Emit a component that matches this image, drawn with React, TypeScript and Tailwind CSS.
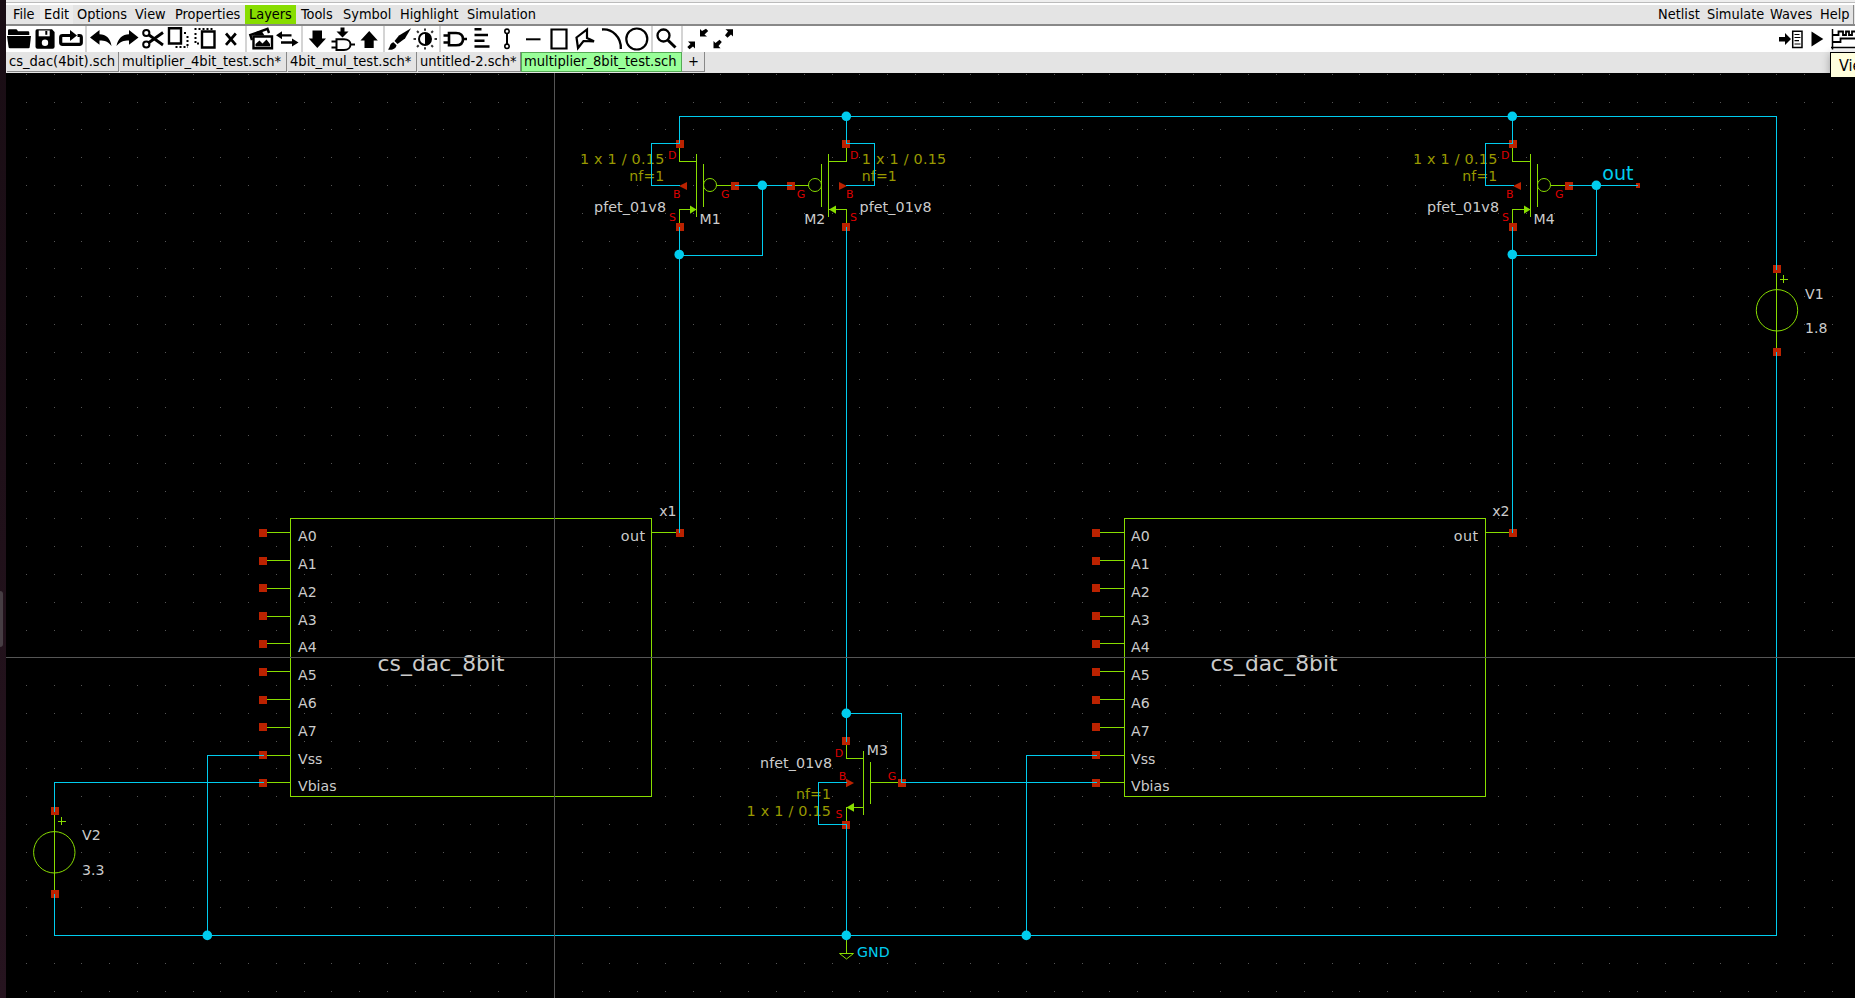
import React, { ReactNode } from "react";

const WIRE = "#00ccee";
const SYM = "#88dd00";
const PIN = "#bb2200";

/* ---------- menu bar ---------- */

function MenuItem({ label, className }: { label: string; className: string }) {
  return <div className={`h-[19px] shrink-0 whitespace-nowrap leading-[19px] ${className}`}>{label}</div>;
}

function MenuBar() {
  return (
    <div className="flex h-[21px] shrink-0 border-b-2 border-[#888888] bg-[#e4e4e4] pl-[2px]">
      <MenuItem label="File" className="w-[32px] pl-[5px]" />
      <MenuItem label="Edit" className="w-[33px] bg-[#ececec] pl-[4px]" />
      <MenuItem label="Options" className="w-[57px] pl-[4px]" />
      <MenuItem label="View" className="w-[41px] pl-[5px]" />
      <MenuItem label="Properties" className="w-[74px] pl-[4px]" />
      <MenuItem label="Layers" className="w-[51px] bg-[#88dd00] pl-[4px]" />
      <MenuItem label="Tools" className="w-[43px] pl-[5px]" />
      <MenuItem label="Symbol" className="w-[57px] pl-[4px]" />
      <MenuItem label="Highlight" className="w-[67px] pl-[4px]" />
      <MenuItem label="Simulation" className="w-[90px] pl-[4px]" />
      <div className="flex-1" />
      <MenuItem label="Netlist" className="w-[49px] pl-[4px]" />
      <MenuItem label="Simulate" className="w-[63px] pl-[4px]" />
      <MenuItem label="Waves" className="w-[50px] pl-[4px]" />
      <MenuItem label="Help" className="w-[38px] border-r border-[#888888] pl-[4px]" />
      <div className="w-px" />
    </div>
  );
}

/* ---------- tool bar ---------- */

function Tool({ x, w, cls, children }: { x: number; w: number; cls: string; children: ReactNode }) {
  return (
    <svg className={`h-[26px] shrink-0 ${cls}`} viewBox={`${x} 26 ${w} 26`} fill="none" stroke="#000" strokeWidth={2}>
      {children}
    </svg>
  );
}

function Sep() {
  return <div className="h-[26px] w-[2px] shrink-0 bg-[#d4d4d4]" />;
}

function ToolBar() {
  return (
    <div className="flex h-[26px] shrink-0 bg-white">
      <Tool x={6} w={27} cls="w-[27px]">
        <g fill="#000" stroke="none">
          <path d="M8 35V30.5q0-1.2 1.2-1.2H16q1 0 1.4 1l.5 1H28q1.3 0 1.3 1.3V35z" />
          <path d="M7 36H31L29.7 47.3q-.2 1-1.2 1H9.8q-1 0-1.2-1z" />
        </g>
      </Tool>
      <Tool x={33} w={25} cls="w-[25px]">
        <path d="M37 29.3H52L54.6 32V46.7q0 2-2 2H37.5q-2 0-2-2V31q0-1.7 1.5-1.7z" fill="#000" stroke="none" />
        <path d="M38.7 30.5H49.7V36.3H38.7z" fill="#fff" stroke="none" />
        <path d="M46.3 31V34.8" />
        <circle cx="45" cy="42.8" r="3.2" fill="#fff" stroke="none" />
      </Tool>
      <Tool x={58} w={27} cls="w-[27px]">
        <path d="M67 35.5H62.5q-1.8 0-1.8 1.8V42.6q0 1.8 1.8 1.8H79.5q1.8 0 1.8-1.8V37.3q0-1.8-1.8-1.8H77.5M66 35.5H71" strokeWidth="3.2" />
        <path d="M70 30L77 35.5L70 41z" fill="#000" stroke="none" />
      </Tool>
      <Sep />
      <Tool x={87} w={26} cls="w-[26px]">
        <path d="M90 37.5L99.5 30V34.3C106 34.3 110.5 38.5 111.5 46C108 41.3 105 40.5 99.5 40.5V44.7z" fill="#000" stroke="none" />
      </Tool>
      <Tool x={113} w={27} cls="w-[27px]">
        <path d="M138.5 37.5L129 30V34.3C122.5 34.3 118 38.5 116.5 46C120.5 41.3 123.5 40.5 129 40.5V44.7z" fill="#000" stroke="none" />
      </Tool>
      <Tool x={140} w={26} cls="w-[26px]">
        <circle cx="146.3" cy="33" r="3.1" />
        <circle cx="146.3" cy="44.5" r="3.1" />
        <path d="M149 35L163 45M149 42.5L163 32.5" strokeWidth="2.8" />
      </Tool>
      <Tool x={166} w={26} cls="w-[26px]">
        <path d="M169 28.2H181V43.5H169z" strokeWidth="2.4" />
        <path d="M184 33H188M187.5 36V48M175.5 47H188" strokeDasharray="2 2" />
      </Tool>
      <Tool x={192} w={26} cls="w-[26px]">
        <path d="M202 31.5H214.5V47.5H202z" strokeWidth="2.4" />
        <path d="M194.5 29H214M195.5 33V45M199 43.5H195" strokeDasharray="2 2" />
      </Tool>
      <Tool x={218} w={27} cls="w-[27px]">
        <path d="M226 33.5L235.8 44.8M235.8 33.5L226 44.8" strokeWidth="2.7" />
      </Tool>
      <Sep />
      <Tool x={247} w={27} cls="w-[27px]">
        <path d="M253.5 36.5H272V48.2H253.5z" strokeWidth="2.4" />
        <path d="M255.5 46.5V44L259.5 40.5L262.5 43.5L266.5 39.5L270 44V46.5z" fill="#000" stroke="none" />
        <path d="M252 40L250.3 35L267.5 28.8L269 33" strokeWidth="2.4" />
        <path d="M253.5 35.5L257 31.5L262 31.5L264.5 35.5z" fill="#000" stroke="none" />
      </Tool>
      <Tool x={274} w={27} cls="w-[27px]">
        <path d="M279 35.3H291.5M281 42.5H295" strokeWidth="2.3" />
        <path d="M276 35.3L282 31.3V39.3zM298.5 42.5L292 38.5V46.5z" fill="#000" stroke="none" />
      </Tool>
      <Sep />
      <Tool x={303} w={26} cls="w-[26px]">
        <path d="M312.5 30.5H322V38.5H326L317.3 48L308.7 38.5H312.5z" fill="#000" stroke="none" />
      </Tool>
      <Tool x={329} w={29} cls="w-[29px]">
        <path d="M340.5 27.5H344.5V31.5H348.5L342.5 37.5L336.5 31.5H340.5z" fill="#000" stroke="none" />
        <path d="M336.5 39.3H344C348 39.3 350.5 41.5 350.5 44.5S348 50 344 50H336.5zM331.5 41.5H336M331.5 47.5H336M351 44.5H355" />
      </Tool>
      <Tool x={358} w={25} cls="w-[25px]">
        <path d="M364.5 48H373.7V40.5H377.8L369.2 31L360.5 40.5H364.5z" fill="#000" stroke="none" />
      </Tool>
      <Sep />
      <Tool x={385} w={27} cls="w-[27px]">
        <path d="M411 28.3L405 38.5L397.5 44L394.5 41L399 35.5z" fill="#000" stroke="none" />
        <path d="M393.5 42.3L396.5 45.3C396 49 392 50.5 388 49.5C390.5 47.5 389.5 43 393.5 42.3z" fill="#000" stroke="none" />
      </Tool>
      <Tool x={412} w={27} cls="w-[27px]">
        <circle cx="425" cy="39" r="6" />
        <path d="M425 33A6 6 0 0 1 425 45z" fill="#000" stroke="none" />
        <path d="M425 28.5V30.7M425 47.3V49.5M413.5 39H416M434.5 39H437M417 31L418.7 32.7M433 31L431.3 32.7M417 47L418.7 45.3M433 47L431.3 45.3" stroke="#333" />
      </Tool>
      <Sep />
      <Tool x={441} w={28} cls="w-[28px]">
        <path d="M449 33H456C460.5 33 463 35.5 463 39.2S460.5 45.3 456 45.3H449zM443.5 35.5H449M443.5 42.5H449M463 39H467" strokeWidth="2.6" />
      </Tool>
      <Tool x={469} w={28} cls="w-[28px]">
        <path d="M474.5 29.2H481.5M474.5 35H488M474.5 40.7H484.5M474.5 46.4H489.5" strokeWidth="2.5" />
      </Tool>
      <Tool x={497} w={23} cls="w-[23px]">
        <circle cx="507" cy="31.3" r="2.2" strokeWidth="1.6" />
        <circle cx="507" cy="46.3" r="2.2" strokeWidth="1.6" />
        <path d="M507 33V45" />
      </Tool>
      <Tool x={520} w={28} cls="w-[28px]">
        <path d="M526 39.3H540.5" />
      </Tool>
      <Tool x={548} w={24} cls="w-[24px]">
        <path d="M551.5 29.5H566.5V48.5H551.5z" strokeWidth="2.2" />
      </Tool>
      <Tool x={572} w={28} cls="w-[28px]">
        <path d="M576.5 37.5L587 29.5V38L594 41.3L583.5 41L578 48z" strokeWidth="2.2" />
      </Tool>
      <Tool x={600} w={24} cls="w-[24px]">
        <path d="M602 29.5C612 28.5 621.5 37 620.8 49" strokeWidth="2.3" />
      </Tool>
      <Tool x={624} w={27} cls="w-[27px]">
        <circle cx="636.8" cy="39" r="10.5" strokeWidth="2.2" />
      </Tool>
      <Sep />
      <Tool x={653} w={28} cls="w-[28px]">
        <circle cx="663.5" cy="35.5" r="6" strokeWidth="2.3" />
        <path d="M668 40.2L675.5 47.5" strokeWidth="3" />
      </Tool>
      <Sep />
      <Tool x={683} w={28} cls="w-[28px]">
        <path d="M700 29L702 31L706 28.8L708.2 31L704.5 34.5L707 36.5H700zM688 41.5H695V48.5L693 46.5L689.5 49.3L687.3 47L690.5 44z" fill="#000" stroke="none" />
      </Tool>
      <Tool x={711} w={25} cls="w-[25px]">
        <path d="M725.5 29.3H733V36.5L731 34.5L727.5 37.8L725 35.3L728 31.5zM713.5 41L715.5 43L719.5 39.8L721.8 42L718.5 46L720.5 48.3H713.5z" fill="#000" stroke="none" />
      </Tool>
      <div className="flex-1" />
      <Tool x={1777} w={28} cls="w-[28px]">
        <path d="M1779 37H1785V33L1791 39L1785 45V41.5H1779z" fill="#000" stroke="none" />
        <path d="M1792.7 31.2H1802V47.5H1792.7z" strokeWidth="1.5" />
        <path d="M1794.5 34.5H1799.5M1794.5 37.5H1800.5M1794.5 40.7H1799M1794.5 44H1800.5" strokeWidth="1.2" />
      </Tool>
      <Tool x={1805} w={22} cls="w-[22px]">
        <path d="M1811.5 31.5L1823.3 39L1811.5 46.5z" fill="#000" stroke="none" />
      </Tool>
      <Tool x={1827} w={28} cls="w-[28px]">
        <path d="M1832.5 29V49.5M1831 47.5H1855" strokeWidth="1.5" />
        <path d="M1833 35H1838.5V31.5H1843V35H1846V31.5H1849V35H1852V31.5H1855M1833 42H1840.5V38.5H1855" strokeWidth="1.8" />
      </Tool>
    </div>
  );
}

/* ---------- tabs ---------- */

function Tab({ label, className }: { label: string; className: string }) {
  return (
    <div className={`h-[20px] shrink-0 whitespace-nowrap border-b border-r border-[#888888] leading-[18px] ${className}`}>
      {label}
    </div>
  );
}

function TabBar() {
  return (
    <div className="flex h-[21px] shrink-0 bg-[#e4e4e4] pl-px text-[14.55px]">
      <Tab label="cs_dac(4bit).sch" className="mr-px w-[112px] pl-[2px]" />
      <Tab label="multiplier_4bit_test.sch*" className="mr-px w-[167px] pl-[2px]" />
      <Tab label="4bit_mul_test.sch*" className="mr-px w-[129px] pl-[2px]" />
      <Tab label="untitled-2.sch*" className="w-[103px] pl-[2px]" />
      <div className="h-[20px] w-[161px] shrink-0 whitespace-nowrap border border-[#55aa55] bg-[#99ff99] pl-[2px] leading-[16px]">
        multiplier_8bit_test.sch
      </div>
      <Tab label="+" className="w-[23px] pl-[6px]" />
    </div>
  );
}

/* ---------- schematic ---------- */

type LabelProps = { x: number; y: number; w?: number; s?: number; fill?: string; end?: boolean; children: string };

function Label({ x, y, w, s = 14.1, fill = "#cccccc", end = false, children }: LabelProps) {
  return (
    <text x={x} y={y} textLength={w} fontSize={s} fill={fill} textAnchor={end ? "end" : "start"}>
      {children}
    </text>
  );
}

function Line({ d, c = WIRE }: { d: string; c?: string }) {
  return <path d={d} transform="translate(.5 .5)" stroke={c} fill="none" shapeRendering="crispEdges" strokeLinecap="square" />;
}

function Pin({ x, y }: { x: number; y: number }) {
  return <rect x={x} y={y} width={8} height={8} fill={PIN} />;
}

function Node({ x, y }: { x: number; y: number }) {
  return <circle cx={x} cy={y} r={4.8} fill={WIRE} />;
}

function Pfet({ dx, cx, name }: { dx: number; cx: number; name: string }) {
  const X = (n: number) => n + dx;
  const C = (n: number) => n + cx;
  return (
    <g>
      <Pin x={X(676)} y={140} />
      <Pin x={X(676)} y={223} />
      <Pin x={C(731)} y={182} />
      <path d={`M${C(679)} 186L${C(687)} 182V190z`} fill={PIN} />
      <Line c={SYM} d={`M${X(679)} 148V161H${C(696)}M${C(696)} 154V216M${C(703)} 164V206M${C(717)} 185H${C(730)}M${X(679)} 222V209H${C(696)}`} />
      <circle cx={C(710)} cy={185} r={6.5} fill="none" stroke={SYM} />
      <path d={`M${C(690)} 205.5L${C(696.5)} 209.5L${C(690)} 213.7z`} fill={SYM} />
      <Label x={X(664.3)} y={164} w={84.4} s={14.4} fill="#999900" end>1 x 1 / 0.15</Label>
      <Label x={X(664.3)} y={181} w={35} fill="#999900" end>nf=1</Label>
      <Label x={X(666)} y={212} w={72} s={14.3} end>pfet_01v8</Label>
      <Label x={C(699.5)} y={224}>{name}</Label>
      <Label x={X(668)} y={159} s={11} fill="#dd0000">D</Label>
      <Label x={X(673)} y={198} s={11} fill="#dd0000">B</Label>
      <Label x={C(721)} y={198} s={11} fill="#dd0000">G</Label>
      <Label x={X(669)} y={221} s={11} fill="#dd0000">S</Label>
      <Line d={`M${X(679)} 116V143H${C(651)}V185H${C(679)}M${C(735)} 185H${C(762)}M${X(679)} 227V532`} />
    </g>
  );
}

const PORTS: [string, number, number][] = [
  ["A0", 529, 532],
  ["A1", 557, 560],
  ["A2", 584, 588],
  ["A3", 612, 616],
  ["A4", 640, 643],
  ["A5", 668, 671],
  ["A6", 696, 699],
  ["A7", 723, 727],
  ["Vss", 751, 755],
  ["Vbias", 779, 782],
];

function Dac({ dx, left, name }: { dx: number; left: number; name: string }) {
  return (
    <g>
      {PORTS.map(([port, top, y]) => (
        <g key={port}>
          <Pin x={259 + dx} y={top} />
          <Line c={SYM} d={`M${267 + dx} ${y}H${left}`} />
          <Label x={298 + dx} y={y + 9}>{port}</Label>
        </g>
      ))}
      <Line c={SYM} d={`M${left} 518H${left + 361}V796H${left}zM${left + 361} 532H${675 + dx}`} />
      <Pin x={676 + dx} y={529} />
      <Label x={645 + dx} y={541} w={24.3} s={14.3} end>out</Label>
      <Label x={676.5 + dx} y={516} end>{name}</Label>
      <Label x={377.6 + dx} y={671} w={127} s={21.8}>cs_dac_8bit</Label>
    </g>
  );
}

type SourceProps = { x: number; y: number; cx: number; name: string; nameY: number; value: string; tx: number };

function Source({ x, y, cx, name, nameY, value, tx }: SourceProps) {
  return (
    <g>
      <Pin x={x - 3} y={y - 45} />
      <Pin x={x - 3} y={y + 38} />
      <circle cx={cx} cy={y + 0.3} r={20.7} fill="none" stroke={SYM} />
      <Line c={SYM} d={`M${x} ${y - 37}V${y + 37}M${x + 4} ${y - 31}H${x + 11}M${x + 7} ${y - 35}V${y - 28}`} />
      <Label x={tx} y={nameY}>{name}</Label>
      <Label x={tx} y={y + 23}>{value}</Label>
    </g>
  );
}

const GRID: string = (() => {
  let d = "";
  for (let i = 0; i < 67; i++) {
    for (let j = 0; j < 34; j++) {
      d += `M${Math.floor(26.4 + i * 27.78)} ${Math.floor(74.4 + j * 27.78)}h1v1h-1z`;
    }
  }
  return d;
})();

function Schematic() {
  return (
    <svg
      className="block h-[925px] w-[1849px] shrink-0 bg-black font-['DejaVu_Sans',sans-serif] font-stretch-normal"
      viewBox="6 73 1849 925"
    >
      <path d={GRID} fill="#555555" shapeRendering="crispEdges" />

      <Dac dx={0} left={290} name="x1" />
      <Dac dx={833} left={1124} name="x2" />
      <Pfet dx={0} cx={0} name="M1" />
      <Pfet dx={833} cx={834} name="M4" />

      <Pin x={842} y={140} />
      <Pin x={842} y={223} />
      <Pin x={787} y={182} />
      <path d="M839 182L847 186L839 190z" fill={PIN} />
      <Line c={SYM} d="M846 148V161H828M828 154V216M821 164V206M795 185H808M846 222V209H828" />
      <circle cx={815} cy={185} r={6.5} fill="none" stroke={SYM} />
      <path d="M836 205.5L829 209.5L836 213.7z" fill={SYM} />
      <Label x={861.8} y={164} w={84.4} s={14.4} fill="#999900">1 x 1 / 0.15</Label>
      <Label x={861.8} y={181} w={35} fill="#999900">nf=1</Label>
      <Label x={859.5} y={212} w={72} s={14.3}>pfet_01v8</Label>
      <Label x={825.3} y={224} end>M2</Label>
      <Label x={850} y={159} s={11} fill="#dd0000">D</Label>
      <Label x={846} y={198} s={11} fill="#dd0000">B</Label>
      <Label x={796.8} y={198} s={11} fill="#dd0000">G</Label>
      <Label x={850} y={221} s={11} fill="#dd0000">S</Label>

      <Pin x={842} y={737} />
      <Pin x={842} y={821} />
      <Pin x={898} y={779} />
      <path d="M846 778.7L854 783L846 787.3z" fill={PIN} />
      <Line c={SYM} d="M846 745V758H863M863 751V814M870 762V803M870 782H897M863 807H846V820" />
      <path d="M846.5 807.5L854 803V811.7z" fill={SYM} />
      <Label x={832} y={768} w={72} s={14.3} end>nfet_01v8</Label>
      <Label x={831} y={799} w={35} fill="#999900" end>nf=1</Label>
      <Label x={831} y={816} w={84.4} s={14.4} fill="#999900" end>1 x 1 / 0.15</Label>
      <Label x={866.8} y={755}>M3</Label>
      <Label x={834.8} y={757} s={11} fill="#dd0000">D</Label>
      <Label x={838.8} y={780} s={11} fill="#dd0000">B</Label>
      <Label x={887.8} y={780} s={11} fill="#dd0000">G</Label>
      <Label x={835.5} y={818} s={11} fill="#dd0000">S</Label>

      <Source x={54} y={852} cx={54.3} name="V2" nameY={840} value="3.3" tx={82} />
      <Source x={1776} y={310} cx={1777} name="V1" nameY={299} value="1.8" tx={1805} />

      <Line c={SYM} d="M846 935V953" />
      <path d="M839.5 953.5H853.5L846.5 959z" fill="none" stroke={SYM} />
      <Label x={857} y={957} w={32.8} s={14.2} fill={WIRE}>GND</Label>
      <Label x={1602.3} y={180} s={19.1} fill={WIRE}>out</Label>
      <rect x={1636} y={183} width={4} height={5} fill={PIN} />

      <Line d="M679 116H1776V269M1776 352V935H54V894M54 811V782H263M263 755H207V935" />
      <Line d="M846 116V143H874V185H846M735 185H791M762 185V255H679M846 227V741M846 713H901V782H1096" />
      <Line d="M846 782H818V824H846V935M1096 755H1026V935M1595 185H1637M1596 185V255H1512" />

      <Node x={846.3} y={116.3} />
      <Node x={1512.3} y={116.3} />
      <Node x={762.3} y={185.3} />
      <Node x={1596.3} y={185.3} />
      <Node x={679.2} y={254.5} />
      <Node x={1512.3} y={254.5} />
      <Node x={846.3} y={713.4} />
      <Node x={846.3} y={935.4} />
      <Node x={207.3} y={935.4} />
      <Node x={1026.3} y={935.4} />

      <path d="M554.5 73V998M6 657.5H1855" stroke="#555555" shapeRendering="crispEdges" />
    </svg>
  );
}

export default function App() {
  return (
    <div className="relative flex h-[998px] w-[1855px] overflow-hidden bg-black font-['DejaVu_Sans_Condensed','DejaVu_Sans',sans-serif] font-stretch-condensed text-[14.4px] text-black">
      <div className="flex w-[6px] shrink-0 items-start bg-linear-to-b from-[#190d14] to-[#26141f]">
        <div className="mt-[591px] h-[56px] w-[3px] rounded-r-[3px] bg-[#463d43]" />
      </div>
      <div className="flex w-[1849px] shrink-0 flex-col">
        <div className="h-[5px] shrink-0 border-b-2 border-white bg-[#eeeeee]">
          <div className="h-[3px] border-b border-[#bbbbbb]" />
        </div>
        <MenuBar />
        <ToolBar />
        <TabBar />
        <Schematic />
      </div>
      <div className="absolute left-[1830px] top-[52px] h-[26px] w-[60px] whitespace-nowrap border border-black bg-[#ffffdd] pl-[8px] text-[16px] leading-[26px] shadow-[0_2px_8px_rgba(0,0,0,0.3)]">
        Vie
      </div>
    </div>
  );
}
